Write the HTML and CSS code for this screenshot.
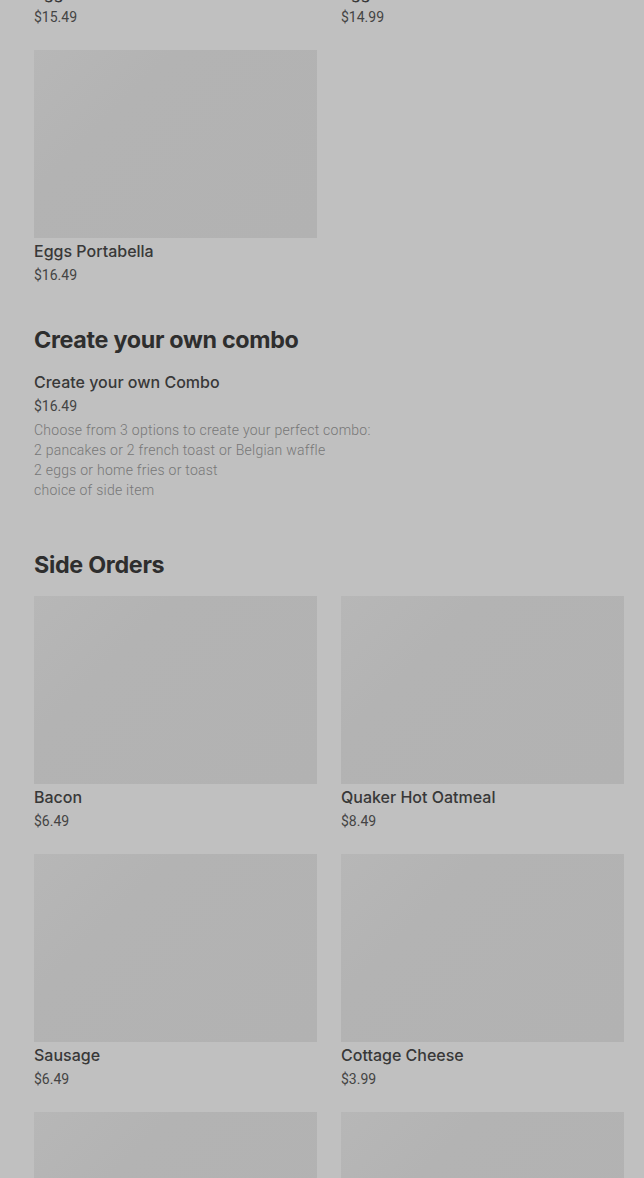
FILE: index.html
```html
<!DOCTYPE html>
<html lang="en">
<head>
<meta charset="utf-8">
<title>Menu</title>
<link rel="stylesheet" href="styles.css">
</head>
<body>
<main class="page">
  <section class="section section-first">
    <div class="grid">
      <div class="card"><div class="thumb"></div><div class="card-title">Eggs Benedict</div><div class="card-price">$15.49</div></div>
      <div class="card"><div class="thumb"></div><div class="card-title">Eggs Florentine</div><div class="card-price">$14.99</div></div>
      <div class="card"><div class="thumb"></div><div class="card-title">Eggs Portabella</div><div class="card-price">$16.49</div></div>
    </div>
  </section>

  <section class="section">
    <h2 class="section-title">Create your own combo</h2>
    <div class="item">
      <div class="item-title">Create your own Combo</div>
      <div class="item-price">$16.49</div>
      <div class="item-desc">Choose from 3 options to create your perfect combo:<br>2 pancakes or 2 french toast or Belgian waffle<br>2 eggs or home fries or toast<br>choice of side item</div>
    </div>
  </section>

  <section class="section section-sides">
    <h2 class="section-title">Side Orders</h2>
    <div class="grid">
      <div class="card"><div class="thumb"></div><div class="card-title">Bacon</div><div class="card-price">$6.49</div></div>
      <div class="card"><div class="thumb"></div><div class="card-title">Quaker Hot Oatmeal</div><div class="card-price">$8.49</div></div>
      <div class="card"><div class="thumb"></div><div class="card-title">Sausage</div><div class="card-price">$6.49</div></div>
      <div class="card"><div class="thumb"></div><div class="card-title">Cottage Cheese</div><div class="card-price">$3.99</div></div>
      <div class="card"><div class="thumb"></div><div class="card-title">Home Fries</div><div class="card-price">$4.99</div></div>
      <div class="card"><div class="thumb"></div><div class="card-title">Toast</div><div class="card-price">$2.99</div></div>
    </div>
  </section>
</main>
</body>
</html>
```
FILE: styles.css
```css
html, body {
  margin: 0;
  padding: 0;
  background: #c0c0c0;
  overflow: hidden;
}
body {
  font-family: Inter, "Noto Sans", sans-serif;
  color: #333;
}
.page {
  padding: 0 20px 0 34px;
  margin-top: -208px;
}
.section-first {
  padding-bottom: 39px;
}
.grid {
  display: grid;
  grid-template-columns: 283px 283px;
  column-gap: 24px;
  row-gap: 23px;
}
.thumb {
  height: 188px;
  background: linear-gradient(135deg, #b7b7b7 0%, #b3b3b3 30%, #b2b2b2 100%);
}
.card-title {
  padding-top: 1px;
  font-size: 16px;
  line-height: 24px;
  font-weight: 500;
  color: #383838;
  white-space: nowrap;
}
.card-price {
  margin-top: 2px;
  font-family: Roboto, "Noto Sans", sans-serif;
  font-size: 14px;
  line-height: 20px;
  color: #444;
}
.section-title {
  margin: 0;
  font-size: 23.3px;
  line-height: 32px;
  font-weight: 700;
  letter-spacing: -0.3px;
  color: #2e2e2e;
}
.item {
  padding-top: 14px;
}
.item-title {
  font-size: 16px;
  line-height: 24px;
  font-weight: 500;
  color: #383838;
}
.item-price {
  margin-top: 2px;
  font-family: Roboto, "Noto Sans", sans-serif;
  font-size: 14px;
  line-height: 20px;
  color: #444;
}
.item-desc {
  margin-top: 4px;
  font-family: Roboto, "Noto Sans", sans-serif;
  font-size: 14px;
  line-height: 20px;
  font-weight: 300;
  letter-spacing: 0.25px;
  color: #777;
}
.section-sides {
  padding-top: 49px;
}
.section-sides .section-title {
  margin-bottom: 15px;
}
```
